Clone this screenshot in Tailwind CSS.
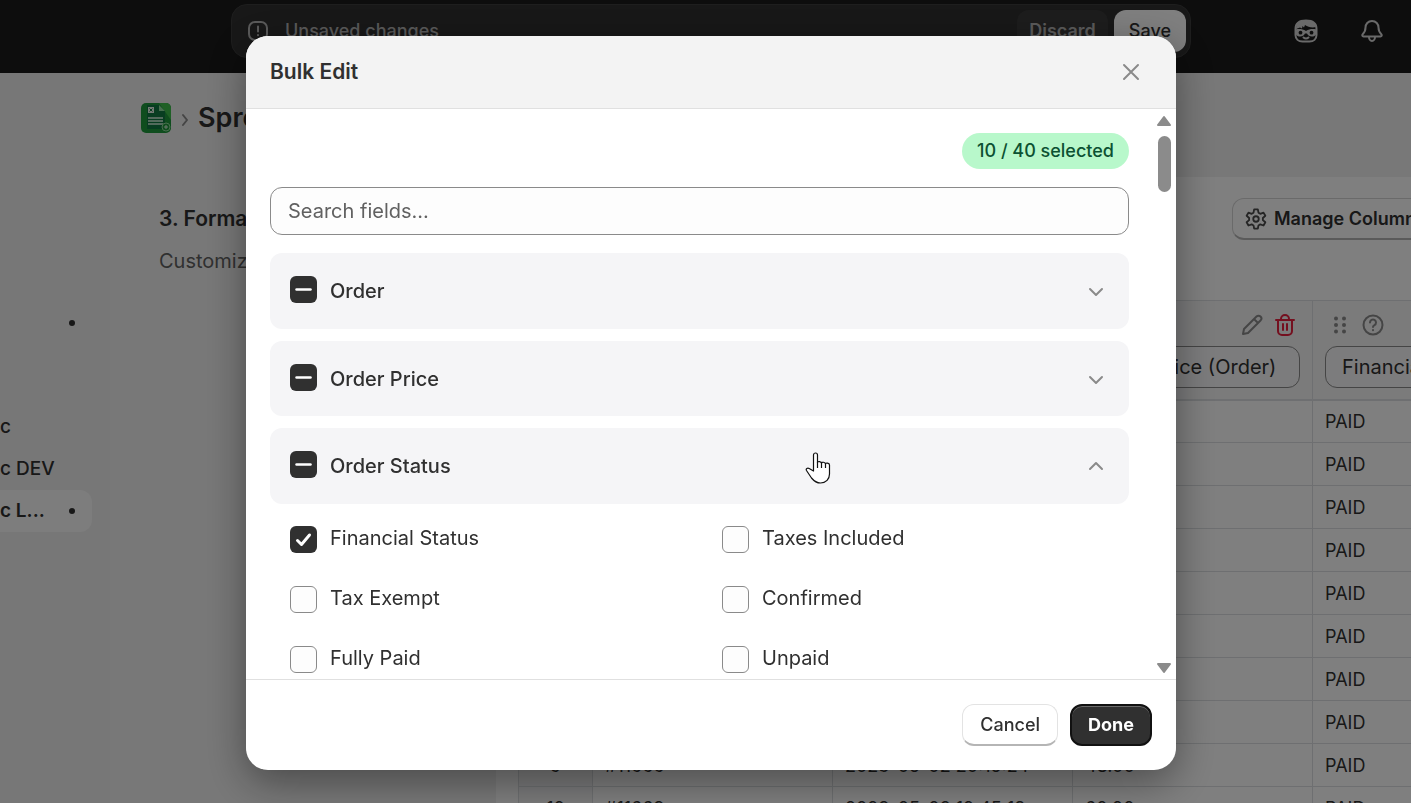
<!DOCTYPE html>
<html lang="en">
<head>
  <meta charset="UTF-8">
  <title>Bulk Edit</title>
  <meta name="viewport" content="width=device-width, initial-scale=1.0">
  <script src="https://cdn.jsdelivr.net/npm/@tailwindcss/browser@4"></script>
</head>
<body class="h-screen overflow-hidden bg-[#f1f1f1] font-['Inter',sans-serif] text-[#303030]">

  <!-- Page behind the dialog -->
  <div class="flex h-full flex-col overflow-hidden">

    <!-- Top bar -->
    <header class="flex h-[73px] shrink-0 items-start bg-[#1a1a1a] pt-1 pr-[27px] pl-[231px]">
      <div class="flex h-[54px] flex-1 items-center rounded-2xl border border-[#3c3c3c] bg-[#303030] pr-1 pl-[15px]">
        <svg class="size-[22px]" viewBox="0 0 22 22" fill="none" stroke="#b5b5b5" stroke-width="2" stroke-linecap="round">
          <rect x="2" y="2" width="18" height="18" rx="6"/>
          <path d="M11 6.500v5M11 15v.2"/>
        </svg>
        <p class="ml-4 text-lg font-medium text-[#b5b5b5]">Unsaved changes</p>
        <button type="button" class="ml-auto h-[42px] rounded-xl bg-[#3a3a3a] px-3 text-lg font-semibold text-[#b5b5b5]">Discard</button>
        <button type="button" class="ml-[6px] h-[42px] rounded-xl bg-white px-[15px] text-lg font-medium">Save</button>
      </div>
      <div class="ml-[103px] flex h-[54px] items-center gap-[42px]">
        <svg class="size-6" viewBox="0 0 24 24" fill="none" stroke="#d4d4d4" stroke-width="2" stroke-linecap="round">
          <path d="M1.500 10C1.500 4 6 1.500 12 1.500S22.500 4 22.500 10v6c0 4-3 6.500-7 6.500h-7c-4 0-7-2.500-7-6.500z"/>
          <path fill="#d4d4d4" stroke="none" d="M2 10c0-6 4-8.500 10-8.500S22 4 22 8c-4 1-8 0-11-2l-1 2.500L8.500 7 8 9.500 6 8.500z"/>
          <path fill="#d4d4d4" stroke="none" d="M1.500 10.500c4-1 7-.5 10.500 1.500 3.500-2 6.500-2.500 10.500-1.500V15c-2 3.500-8 3.500-9.500-.5h-2c-1.500 4-7.500 4-9.500.5z"/>
          <circle cx="6.500" cy="13.700" r="1.900" fill="#1a1a1a" stroke="none"/>
          <circle cx="17.500" cy="13.700" r="1.900" fill="#1a1a1a" stroke="none"/>
          <path d="M9.500 18.500c1.500 1.300 3.500 1.300 5 0"/>
        </svg>
        <svg class="size-6" viewBox="0 0 24 24" fill="none" stroke="#d4d4d4" stroke-width="2" stroke-linejoin="round">
          <path d="M12 2c-4 0-6.500 3-6.500 6.500 0 4-1 5-2.800 6.700-.9.900-.4 2.300.8 2.300h17c1.200 0 1.700-1.400.8-2.300-1.800-1.700-2.800-2.700-2.800-6.700C18.500 5 16 2 12 2z"/>
          <path d="M9 18c0 2 1.200 4 3 4s3-2 3-4"/>
        </svg>
      </div>
    </header>

    <div class="flex min-h-0 flex-1">
      <!-- Side navigation -->
      <nav class="w-[110px] shrink-0 bg-[#eeeeee] pt-[229px] pr-[18px] text-[19px] leading-[42px]">
        <div class="flex h-[42px] items-center justify-end pr-[17px]"><span class="size-[6px] rounded-full bg-[#303030]"></span></div>
        <a href="#" class="mt-[62px] block h-[42px] font-medium">c</a>
        <a href="#" class="block h-[42px] font-medium">c DEV</a>
        <a href="#" class="flex h-[42px] items-center rounded-r-xl bg-[#fafafa] pr-[17px] font-semibold">c L...<span class="ml-auto size-[6px] rounded-full bg-[#303030]"></span></a>
      </nav>

      <main class="min-w-0 flex-1 overflow-hidden pl-[31px]">
        <div class="flex h-[104px] items-start pt-[27px]">
          <svg class="mt-[3px] size-[30px]" viewBox="0 0 30 30">
            <rect width="30" height="30" rx="5" fill="#1f9a3c"/>
            <path d="M18 0h7a5 5 0 0 1 5 5v12z" fill="#3fc04d"/>
            <path d="M6 2h12l6 6v18H6z" fill="#117a42"/>
            <path d="M18 2l6 6h-6z" fill="#8fdc9c"/>
            <rect x="7" y="4" width="6" height="6" fill="#e6f5e8"/>
            <path d="M8.500 5.500l3 3m0-3l-3 3" stroke="#117a42"/>
            <path d="M7 15h15M7 18h15M7 21h15" stroke="#d9f2df" stroke-width="1.500"/>
            <circle cx="25" cy="24" r="4" fill="#1f9a3c" stroke="#8fdc9c"/>
            <path d="M23 24h4m-2-2v4" stroke="#d9f2df"/>
          </svg>
          <svg class="mt-3 ml-2 h-4 w-[11px]" viewBox="0 0 11 16" fill="none" stroke="#8a8a8a" stroke-width="2" stroke-linecap="round" stroke-linejoin="round"><path d="M4 3l4 5-4 5"/></svg>
          <h1 class="ml-2 text-[27px] leading-9 font-semibold">Spreadsheet</h1>
        </div>

        <div class="flex">
          <div class="w-[355px] shrink-0 pt-[27px] pl-[18px]">
            <h2 class="text-[21px] leading-[30px] font-semibold">3. Format</h2>
            <p class="mt-3 text-[20px] leading-[30px] text-[#616161]">Customize</p>
          </div>

          <section class="shrink-0 bg-white px-[22px] pt-[21px] pb-6">
            <div class="flex h-[102px] items-start pl-[714px]">
              <button type="button" class="flex h-[42px] shrink-0 items-center gap-[7px] rounded-xl border border-b-2 border-[#d4d4d4] border-b-[#b5b5b5] px-3 text-lg font-semibold">
                <svg class="size-[22px]" viewBox="0 0 24 24" fill="none" stroke="#4a4a4a" stroke-width="2" stroke-linejoin="round">
                  <path d="M10 1.500h4l.7 3.600 2 1.200 3.500-1.300 2 3.500-2.700 2.400v2.300l2.700 2.400-2 3.500-3.500-1.300-2 1.200-.7 3.500h-4l-.7-3.500-2-1.200-3.500 1.300-2-3.500 2.700-2.400v-2.300L1.800 8.500l2-3.500 3.500 1.300 2-1.200z"/>
                  <circle cx="12" cy="12" r="3"/>
                </svg>
                Manage Columns
              </button>
            </div>

            <table class="w-[1034px] table-fixed border-collapse text-left text-lg">
              <colgroup>
                <col class="w-[74px]"><col class="w-[240px]"><col class="w-[240px]"><col class="w-[240px]"><col class="w-[240px]">
              </colgroup>
              <thead>
                <tr class="h-[99px] bg-[#f6f6f7]">
                  <th class="border border-b-2 border-[#dcdfe2]"></th>
                  <th class="border border-b-2 border-[#dcdfe2]"></th>
                  <th class="border border-b-2 border-[#dcdfe2]"></th>
                  <th class="border border-b-2 border-[#dcdfe2] px-3 pt-3 align-top font-normal">
                    <div class="flex h-6 items-center justify-end gap-[11px] pr-1">
                      <svg class="size-[22px]" viewBox="0 0 22 22" fill="none" stroke="#8a8a8a" stroke-width="2" stroke-linejoin="round"><path d="M2 20l1-5L15.500 2.500a2.500 2.500 0 0 1 4 4L7 19zM13 5l4 4"/></svg>
                      <svg class="size-[22px]" viewBox="0 0 22 22" fill="none" stroke="#e8203f" stroke-width="2" stroke-linecap="round" stroke-linejoin="round"><path d="M2 6h18M7 6V5a4 4 0 0 1 8 0v1M4 6v11a4 4 0 0 0 4 4h6a4 4 0 0 0 4-4V6M9 10v6M13 10v6"/></svg>
                    </div>
                    <input type="text" aria-label="Column name" value="Total Price (Order)" class="mt-[9px] h-[42px] w-full rounded-xl border border-[#8a8a8a] bg-white/40 px-4 text-[20px]">
                  </th>
                  <th class="border border-b-2 border-[#dcdfe2] px-3 pt-3 align-top font-normal">
                    <div class="flex h-6 items-center gap-[11px] pl-1">
                      <svg class="size-[22px]" viewBox="0 0 22 22" fill="#8a8a8a"><circle cx="7" cy="4.500" r="2"/><circle cx="15" cy="4.500" r="2"/><circle cx="7" cy="11" r="2"/><circle cx="15" cy="11" r="2"/><circle cx="7" cy="17.500" r="2"/><circle cx="15" cy="17.500" r="2"/></svg>
                      <svg class="size-[22px]" viewBox="0 0 22 22" fill="none" stroke="#8a8a8a" stroke-width="2" stroke-linecap="round"><circle cx="11" cy="11" r="9.500"/><path d="M8 8.500a3 3 0 1 1 4.500 2.600c-1 .6-1.500 1-1.500 1.900M11 16v.2"/></svg>
                    </div>
                    <input type="text" aria-label="Column name" value="Financial Status" class="mt-[9px] h-[42px] w-full rounded-xl border border-[#8a8a8a] bg-white/40 px-4 text-[20px]">
                  </th>
                </tr>
              </thead>
              <tbody id="rows"></tbody>
            </table>
          </section>
        </div>
      </main>
    </div>
  </div>

  <!-- Backdrop and dialog -->
  <div class="fixed inset-0 flex justify-center bg-black/50 pt-9 pb-[33px] pl-[11px]">
    <div role="dialog" aria-labelledby="dialog-title" class="flex h-full w-full max-w-[930px] flex-col overflow-hidden rounded-[22px] bg-white shadow-[0_12px_40px_rgba(0,0,0,0.4)]">

      <div class="flex h-[73px] shrink-0 items-center justify-between border-b border-[#e0e0e0] bg-[#f3f3f3] pr-[34px] pl-6">
        <h2 id="dialog-title" class="text-[21px] font-semibold">Bulk Edit</h2>
        <button type="button" aria-label="Close">
          <svg class="size-[22px]" viewBox="0 0 22 22" fill="none" stroke="#8a8a8a" stroke-width="2" stroke-linecap="round"><path d="M4 4l14 14M18 4L4 18"/></svg>
        </button>
      </div>

      <div class="flex min-h-0 flex-1">
        <div class="flex-1 overflow-hidden pt-6 pr-[23px] pl-6">
          <div class="flex justify-end">
            <span class="flex h-9 items-center rounded-full bg-[#b8f8cb] px-[15px] text-lg font-medium text-[#0c5132]">10 / 40 selected</span>
          </div>
          <input type="text" aria-label="Search fields" placeholder="Search fields..." class="mt-[18px] block h-12 w-full rounded-xl border border-[#8a8a8a] bg-[#fdfdfd] px-[17px] text-[20px] placeholder:text-[#616161]">

          <div class="mt-[18px] flex flex-col gap-3">
            <div class="flex h-[76px] items-center rounded-xl bg-[#f5f5f7] pr-[22px] pl-5">
              <label class="flex items-start gap-[13px] text-[20px] leading-[30px] font-medium">
                <span class="grid">
                  <input type="checkbox" class="partial col-start-1 row-start-1 size-[27px] appearance-none rounded-md bg-[#303030]">
                  <svg class="pointer-events-none col-start-1 row-start-1 size-[27px]" viewBox="0 0 27 27" stroke="#fff" stroke-width="2.500" stroke-linecap="round"><path d="M6.500 13.500h14"/></svg>
                </span>
                Order
              </label>
              <button type="button" aria-label="Expand Order" class="ml-auto">
                <svg class="size-[22px]" viewBox="0 0 22 22" fill="none" stroke="#8a8a8a" stroke-width="2" stroke-linecap="round" stroke-linejoin="round"><path d="M5 9l6 6 6-6"/></svg>
              </button>
            </div>

            <div class="flex h-[75px] items-center rounded-xl bg-[#f5f5f7] pr-[22px] pl-5">
              <label class="flex items-start gap-[13px] text-[20px] leading-[30px] font-medium">
                <span class="grid">
                  <input type="checkbox" class="partial col-start-1 row-start-1 size-[27px] appearance-none rounded-md bg-[#303030]">
                  <svg class="pointer-events-none col-start-1 row-start-1 size-[27px]" viewBox="0 0 27 27" stroke="#fff" stroke-width="2.500" stroke-linecap="round"><path d="M6.500 13.500h14"/></svg>
                </span>
                Order Price
              </label>
              <button type="button" aria-label="Expand Order Price" class="ml-auto">
                <svg class="size-[22px]" viewBox="0 0 22 22" fill="none" stroke="#8a8a8a" stroke-width="2" stroke-linecap="round" stroke-linejoin="round"><path d="M5 9l6 6 6-6"/></svg>
              </button>
            </div>

            <div class="flex h-[76px] items-center rounded-xl bg-[#f5f5f7] pr-[22px] pl-5">
              <label class="flex items-start gap-[13px] text-[20px] leading-[30px] font-medium">
                <span class="grid">
                  <input type="checkbox" class="partial col-start-1 row-start-1 size-[27px] appearance-none rounded-md bg-[#303030]">
                  <svg class="pointer-events-none col-start-1 row-start-1 size-[27px]" viewBox="0 0 27 27" stroke="#fff" stroke-width="2.500" stroke-linecap="round"><path d="M6.500 13.500h14"/></svg>
                </span>
                Order Status
              </label>
              <button type="button" aria-label="Collapse Order Status" class="ml-auto">
                <svg class="size-[22px]" viewBox="0 0 22 22" fill="none" stroke="#8a8a8a" stroke-width="2" stroke-linecap="round" stroke-linejoin="round"><path d="M5 14l6-6 6 6"/></svg>
              </button>
            </div>
          </div>

          <!-- Fields of the open group -->
          <div class="mt-[22px] grid grid-cols-2 gap-x-[25px] gap-y-[33px] pl-5 text-[20px] leading-[25px]">
            <label class="flex gap-[13px]">
              <span class="grid">
                <input type="checkbox" checked class="col-start-1 row-start-1 size-[27px] appearance-none rounded-md bg-[#303030]">
                <svg class="pointer-events-none col-start-1 row-start-1 size-[27px]" viewBox="0 0 27 27" fill="none" stroke="#fff" stroke-width="3" stroke-linecap="round" stroke-linejoin="round"><path d="M7.500 14.500l4 4L19.500 9"/></svg>
              </span>
              Financial Status
            </label>
            <label class="flex gap-[13px]"><input type="checkbox" class="size-[27px] appearance-none rounded-md border border-[#8a8a8a] bg-[#fdfdfd]">Taxes Included</label>
            <label class="flex gap-[13px]"><input type="checkbox" class="size-[27px] appearance-none rounded-md border border-[#8a8a8a] bg-[#fdfdfd]">Tax Exempt</label>
            <label class="flex gap-[13px]"><input type="checkbox" class="size-[27px] appearance-none rounded-md border border-[#8a8a8a] bg-[#fdfdfd]">Confirmed</label>
            <label class="flex gap-[13px]"><input type="checkbox" class="size-[27px] appearance-none rounded-md border border-[#8a8a8a] bg-[#fdfdfd]">Fully Paid</label>
            <label class="flex gap-[13px]"><input type="checkbox" class="size-[27px] appearance-none rounded-md border border-[#8a8a8a] bg-[#fdfdfd]">Unpaid</label>
          </div>
        </div>

        <!-- Scrollbar -->
        <div class="flex w-6 shrink-0 flex-col items-center pt-[6px] pb-[5px]">
          <svg class="h-3 w-4" viewBox="0 0 16 12" fill="#8b8b8b" stroke="#8b8b8b" stroke-width="2" stroke-linejoin="round"><path d="M8 2l6 8H2z"/></svg>
          <div class="mt-[9px] h-14 w-[13px] rounded-full bg-[#8b8b8b]"></div>
          <svg class="mt-auto h-3 w-4" viewBox="0 0 16 12" fill="#8b8b8b" stroke="#8b8b8b" stroke-width="2" stroke-linejoin="round"><path d="M8 10l6-8H2z"/></svg>
        </div>
      </div>

      <div class="flex shrink-0 justify-end gap-3 border-t border-[#e0e0e0] p-6">
        <button type="button" class="h-[42px] rounded-xl border border-b-2 border-[#e3e3e3] border-b-[#b5b5b5] px-[17px] text-lg font-medium">Cancel</button>
        <button type="button" class="h-[42px] rounded-xl border-2 border-[#111111] bg-[#303030] px-4 text-lg font-bold text-white shadow-[inset_0_1px_0_#6a6a6a]">Done</button>
      </div>
    </div>
  </div>

  <!-- Mouse pointer -->
  <svg class="pointer-events-none absolute top-[452px] left-[805px] h-8 w-[26px]" viewBox="0 0 26 32" fill="#fff" stroke="#111" stroke-width="1.200" stroke-linejoin="round">
    <path d="M8.500 19V3a2 2 0 0 1 4 0v7.500c0-1.500 4-1.300 4 .8 0-1.700 4-1.300 4 .7 0-1.500 4-1 4 1V22c0 5-3.500 9-9 9-4 0-6.500-2-9-5l-5-7.500c-1-1.700 1-3 2.700-2z"/>
    <path d="M12.500 10v6M16.500 11v5M20.500 12v4" fill="none"/>
  </svg>

  <script>
    document.querySelectorAll('.partial').forEach(box => { box.indeterminate = true; });

    const orders = [
      ['#11674', '2023-05-02 21:08:11', '18.00'],
      ['#11673', '2023-05-02 21:02:36', '24.00'],
      ['#11672', '2023-05-02 20:58:40', '32.00'],
      ['#11671', '2023-05-02 20:51:09', '48.00'],
      ['#11670', '2023-05-02 20:44:52', '16.00'],
      ['#11669', '2023-05-02 20:37:18', '60.00'],
      ['#11668', '2023-05-02 20:30:03', '28.00'],
      ['#11667', '2023-05-02 20:22:47', '36.00'],
      ['#11666', '2023-05-02 20:15:24', '48.00'],
      ['#11663', '2023-05-02 12:45:18', '60.00']
    ];

    document.getElementById('rows').innerHTML = orders.map((order, i) => `
      <tr class="h-[43px]">
        <td class="border border-[#dcdfe2] bg-[#f6f6f7] pt-[2px] text-center">${i + 1}</td>
        ${[...order, 'PAID'].map(text => `<td class="border border-[#dcdfe2] px-3 pt-[2px]">${text}</td>`).join('')}
      </tr>`).join('');
  </script>
</body>
</html>
